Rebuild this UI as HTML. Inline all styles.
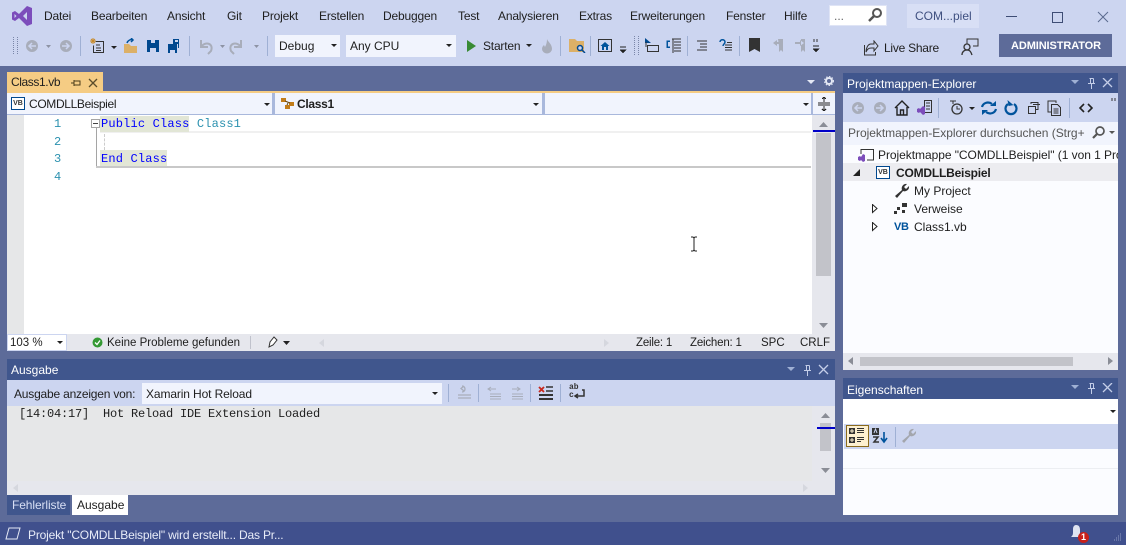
<!DOCTYPE html>
<html><head><meta charset="utf-8"><style>
html,body{margin:0;padding:0}
#r{position:relative;width:1126px;height:545px;overflow:hidden;background:#5d6b99;font-family:"Liberation Sans",sans-serif;font-size:12px;color:#1e1e1e}
.a,.t,svg{position:absolute}
.t{white-space:pre;line-height:16px}
.n{letter-spacing:-.18px}
.m{font-family:"Liberation Mono",monospace;font-size:12px;letter-spacing:.17px}
.o{font-family:"Liberation Mono",monospace;font-size:12px;letter-spacing:-.2px}
.s{width:1px;background:#9fb0d4}
.w{color:#fff}
.c{shape-rendering:crispEdges}
</style></head><body><div id="r">
<div class="a" style="left:0;top:0;width:1126px;height:66px;background:#ccd5f0"></div>
<svg style="left:11px;top:5px" width="22" height="22" viewBox="0 0 22 22"><path d="M16 1l5 2v16l-5 2-8-8-4 3-3-1.500V7.500L4 6l4 3zM16 7l-4 4 4 4zM3.500 9v4l2-2z" fill="#7c4dbb" fill-rule="evenodd"/></svg>
<div class="t n" style="left:44px;top:8px">Datei</div><div class="t n" style="left:91px;top:8px">Bearbeiten</div><div class="t n" style="left:167px;top:8px">Ansicht</div><div class="t n" style="left:227px;top:8px">Git</div><div class="t n" style="left:262px;top:8px">Projekt</div><div class="t n" style="left:319px;top:8px">Erstellen</div><div class="t n" style="left:383px;top:8px">Debuggen</div><div class="t n" style="left:458px;top:8px">Test</div><div class="t n" style="left:498px;top:8px">Analysieren</div><div class="t n" style="left:579px;top:8px">Extras</div><div class="t n" style="left:630px;top:8px">Erweiterungen</div><div class="t n" style="left:726px;top:8px">Fenster</div><div class="t n" style="left:784px;top:8px">Hilfe</div>
<div class="a" style="left:829px;top:5px;width:58px;height:21px;background:#fff;border:1px solid #dfe4f5;box-sizing:border-box"></div><div class="t" style="left:834px;top:8px;color:#666">...</div>
<svg style="left:867px;top:7px" width="16" height="16" viewBox="0 0 16 16"><circle cx="10" cy="6" r="4" fill="none" stroke="#555" stroke-width="2"/><path d="M7 9l-5 5" stroke="#555" stroke-width="2.500"/></svg>
<div class="a" style="left:907px;top:4px;width:72px;height:24px;background:#d8dff5"></div><div class="t" style="left:915px;top:8px;color:#3f5080">COM...piel</div>
<div class="a" style="left:1006px;top:16px;width:11px;height:1px;background:#3e4d75"></div><div class="a" style="left:1052px;top:12px;width:9px;height:9px;border:1px solid #3e4d75"></div>
<svg style="left:1097px;top:11px" width="12" height="12"><path d="M1 1l10 10M11 1L1 11" stroke="#5a6a8f" fill="none"/></svg>

<!-- toolbar -->
<div class="a" style="left:13px;top:37px;width:3px;height:17px;border-left:1px dotted #7a86a8;border-right:1px dotted #7a86a8"></div>
<svg style="left:24px;top:38px" width="50" height="16"><circle cx="8" cy="8" r="6" fill="#a8adba"/><path d="M12 8H5M8 5L5 8l3 3" stroke="#ccd5f0" fill="none" stroke-width="1.500"/><path d="M22 7h5l-2.500 3z" fill="#8d93a4"/><circle cx="42" cy="8" r="6" fill="#a8adba"/><path d="M38 8h7M42 5l3 3-3 3" stroke="#ccd5f0" fill="none" stroke-width="1.500"/></svg>
<div class="a s" style="left:80px;top:36px;height:20px"></div>
<svg style="left:89px;top:38px" width="90" height="17"><path d="M6.500 3.500h8v11h-10v-7" class="c" fill="none" stroke="#333"/><path d="M7 7h4M7 10h5M7 12.500h5" class="c" stroke="#333" fill="none"/><path d="M4 0v6M1 3h6M2 1l4 4M6 1L2 5" stroke="#c88a2a"/><path d="M22 8h6l-3 3z" fill="#222"/><path d="M35 6h5l2 2h6v7H35z" fill="#dcb067"/><path d="M38 5c1-3 4-4 6-3M42 0l2 2-2 2" stroke="#00539c" fill="none" stroke-width="1.500"/><path d="M58 2h12v12H58z" fill="#00488f" class="c"/><path d="M62 2h4v3h-4zM61 10h6v4h-6z" fill="#ccd5f0" class="c"/><path d="M79 6h9v9h-9z" fill="#00488f" class="c"/><path d="M84 1h8v9h-3V6h-5z" fill="#00488f" class="c"/><path d="M81 12h5v3h-5zM86 2h3v2h-3z" fill="#ccd5f0" class="c"/></svg>
<div class="a s" style="left:189px;top:36px;height:20px"></div>
<svg style="left:197px;top:38px" width="64" height="17"><path d="M4 2v7h7M4 9c4-6 13-4 10 4l-3 3" stroke="#a8adba" fill="none" stroke-width="2"/><path d="M23 7h5l-2.500 3z" fill="#8d93a4"/><path d="M44 2v7h-7M44 9c-4-6-13-4-10 4l3 3" stroke="#a8adba" fill="none" stroke-width="2"/><path d="M57 7h5l-2.500 3z" fill="#8d93a4"/></svg>
<div class="a s" style="left:267px;top:36px;height:20px"></div>
<div class="a" style="left:275px;top:35px;width:65px;height:22px;background:#f1f4fd"></div><div class="t" style="left:279px;top:38px">Debug</div>
<svg style="left:331px;top:44px" width="7" height="4"><path d="M0 0h6L3 3z" fill="#222"/></svg>
<div class="a" style="left:346px;top:35px;width:110px;height:22px;background:#f1f4fd"></div><div class="t" style="left:350px;top:38px">Any CPU</div>
<svg style="left:446px;top:44px" width="7" height="4"><path d="M0 0h6L3 3z" fill="#222"/></svg>
<svg style="left:467px;top:40px" width="12" height="13"><path d="M0 0l9 6-9 6z" fill="#388a34"/></svg>
<div class="t n" style="left:483px;top:38px;letter-spacing:-.2px">Starten</div>
<svg style="left:526px;top:44px" width="7" height="4"><path d="M0 0h6L3 3z" fill="#222"/></svg>
<svg style="left:541px;top:39px" width="12" height="15"><path d="M6 0c1 3 5 5 5 10a5 4.500 0 0 1-10 0c0-2 1-3 2-4l1 2c1-2 2-4 2-8z" fill="#a8adba"/></svg>
<div class="a s" style="left:560px;top:36px;height:20px"></div>
<svg style="left:568px;top:39px" width="18" height="14"><path d="M1 0h6l2 2h7v11H1z" fill="#dcb067"/><circle cx="12" cy="9" r="2.500" fill="#ccd5f0" stroke="#00488f" stroke-width="1.500"/><path d="M14 11l3 3" stroke="#00488f" stroke-width="1.500"/></svg>
<div class="a s" style="left:590px;top:36px;height:20px"></div>
<svg style="left:598px;top:39px" width="18" height="14"><rect x=".5" y=".5" width="13" height="12" fill="none" stroke="#333"/><path d="M2.500 7l4.500-4 4.500 4H10v4H4V7z" fill="#00539c"/><path d="M6 8h2v3H6z" fill="#ccd5f0"/></svg>
<svg style="left:620px;top:46px" width="7" height="9" class="c"><path d="M0 1h6M0 4h6L3 7z" stroke="#222" fill="#222" stroke-width=".7"/></svg>
<div class="a" style="left:634px;top:36px;width:3px;height:19px;border-left:1px dotted #7a86a8;border-right:1px dotted #7a86a8"></div>
<svg style="left:644px;top:38px" width="16" height="16"><path d="M1 0l6 5H1z" fill="#00488f"/><rect x="3.500" y="7.500" width="11" height="6" fill="none" stroke="#333" class="c"/><path d="M2 4v5" stroke="#333"/></svg>
<svg style="left:666px;top:38px" width="16" height="16" class="c"><path d="M6 1h9M8 4h7M8 7h7M8 10h7M8 13h7M7 1v14" stroke="#333"/><path d="M4 3H1v6h3" fill="none" stroke="#00539c" stroke-width="1.500"/></svg>
<div class="a s" style="left:687px;top:36px;height:20px"></div>
<svg style="left:696px;top:40px" width="14" height="12" class="c"><path d="M1 1h10M4 4h7M4 7h7M1 10h10" stroke="#333"/></svg>
<svg style="left:719px;top:39px" width="14" height="13"><path d="M1 3c0-3 5-3 5 0 0 2-2 2-2 4" stroke="#00539c" fill="none" stroke-width="1.500"/><path class="c" d="M6 6h7M6 8.500h7M6 11h7M8 3.500h5" stroke="#333"/></svg>
<div class="a s" style="left:739px;top:36px;height:20px"></div>
<svg style="left:749px;top:38px" width="12" height="15"><path d="M0 0h11v14l-5.500-3L0 14z" fill="#333"/></svg>
<svg style="left:772px;top:38px" width="48" height="16"><path d="M6 1h5v13l-2-2-2 2V8M1 5l4-3v2h3v2H5v2z" fill="#a8adba"/><path d="M31 1h-2v13l2-2 2 2V1zM23 4h5V2l4 3-4 3V6h-5z" fill="#a8adba"/><path d="M42 1v3M45 1v3" stroke="#333" class="c"/></svg>
<svg style="left:813px;top:45px" width="7" height="10" class="c"><path d="M0 1h6M0 4h6L3 7z" stroke="#222" fill="#222" stroke-width=".7"/></svg>
<svg style="left:863px;top:40px" width="16" height="16"><path d="M8 4h3V1l4 5-4 5V8H8c-3 0-4 2-5 4 0-4 2-8 5-8zM1.500 5v10h11v-3" fill="none" stroke="#333"/></svg>
<div class="t" style="left:884px;top:40px;letter-spacing:-.25px">Live Share</div>
<svg style="left:961px;top:38px" width="18" height="18"><path d="M6 6V1h11v7h-5" fill="none" stroke="#333"/><circle cx="6" cy="9" r="3" fill="none" stroke="#333" stroke-width="1.300"/><path d="M1 17c0-3 2-5 5-5s4 2 5 5" fill="none" stroke="#333" stroke-width="1.300"/></svg>
<div class="a" style="left:999px;top:34px;width:113px;height:23px;background:#5d6b99"></div><div class="t w" style="left:1011px;top:38px;font-weight:bold;font-size:11px;letter-spacing:-.1px">ADMINISTRATOR</div>

<!-- doc tab -->
<div class="a" style="left:7px;top:72px;width:96px;height:19px;background:#f5cc84"></div><div class="t" style="left:11px;top:74px;letter-spacing:-.4px">Class1.vb</div>
<svg style="left:70px;top:78px" width="30" height="10"><path d="M1 5h3M4 2v6M4 3h6v4H4" stroke="#4a3c1a" fill="none" class="c"/><path d="M19 1l8 8M27 1l-8 8" stroke="#5b4d2b" stroke-width="1.300"/></svg>
<svg style="left:807px;top:80px" width="8" height="5"><path d="M0 0h8L4 4z" fill="#e5e9f5"/></svg>
<svg style="left:824px;top:76px" width="10" height="10"><circle cx="5" cy="5" r="3" fill="none" stroke="#e5e9f5" stroke-width="2"/><circle cx="5" cy="5" r="4.500" fill="none" stroke="#e5e9f5" stroke-dasharray="1.500 1.500"/></svg>
<div class="a" style="left:7px;top:91px;width:828px;height:2px;background:#f5cc84"></div>
<div class="a" style="left:7px;top:93px;width:828px;height:22px;background:#a9b8dc"></div>
<div class="a" style="left:7px;top:93px;width:265px;height:21px;background:#f1f4fd"></div>
<div class="a" style="left:275px;top:93px;width:267px;height:21px;background:#f1f4fd"></div>
<div class="a" style="left:545px;top:93px;width:266px;height:21px;background:#f1f4fd"></div>
<div class="a" style="left:813px;top:93px;width:22px;height:21px;background:#f1f4fd"></div>
<div class="a" style="left:11px;top:97px;width:12px;height:11px;border:1px solid #00488f;box-sizing:content-box;background:#fff;font-size:7px;line-height:11px;text-align:center;font-weight:bold;color:#333">VB</div>
<div class="t" style="left:29px;top:96px;letter-spacing:-.35px">COMDLLBeispiel</div>
<svg style="left:264px;top:103px" width="7" height="4"><path d="M0 0h6L3 3z" fill="#222"/></svg>
<svg style="left:280px;top:97px" width="15" height="13"><path d="M1 1h5v4H1zM9 5h5v4H9zM5 8h5v4H5z" fill="#c27d1a"/><path d="M5 4l5 2M7 8l1-2" stroke="#6b4a10"/></svg>
<div class="t" style="left:297px;top:96px;font-weight:bold;letter-spacing:-.3px">Class1</div>
<svg style="left:533px;top:103px" width="7" height="4"><path d="M0 0h6L3 3z" fill="#222"/></svg>
<svg style="left:803px;top:103px" width="7" height="4"><path d="M0 0h6L3 3z" fill="#222"/></svg>
<svg style="left:817px;top:97px" width="14" height="14" class="c"><path d="M1 6h12M1 8h12M7 0v5M7 9v5M5 2l2-2 2 2M5 12l2 2 2-2" stroke="#222" fill="none"/></svg>

<!-- editor -->
<div class="a" style="left:7px;top:115px;width:828px;height:219px;background:#fff"></div>
<div class="a" style="left:7px;top:115px;width:17px;height:219px;background:#e6e7e8"></div>
<div class="a" style="left:812px;top:115px;width:23px;height:219px;background:#e6e7ed"></div>
<div class="a" style="left:816px;top:133px;width:15px;height:143px;background:#c2c3c9"></div>
<svg style="left:819px;top:122px" width="9" height="5"><path d="M0 5h9L4.500 0z" fill="#8a8d96"/></svg>
<svg style="left:819px;top:323px" width="9" height="5"><path d="M0 0h9L4.500 5z" fill="#8a8d96"/></svg>
<div class="a" style="left:813px;top:130px;width:22px;height:2px;background:#0000c8"></div>
<div class="a" style="left:100px;top:131px;width:711px;height:2px;background:#f0f0f0"></div>
<div class="a" style="left:100px;top:116px;width:89px;height:16px;background:#e2e6d6"></div>
<div class="a" style="left:100px;top:150px;width:67px;height:16px;background:#e2e6d6"></div>
<div class="a" style="left:96px;top:124px;width:1px;height:43px;background:#a5a5a5"></div>
<div class="a" style="left:96px;top:166px;width:715px;height:2px;background:#c8c8c8"></div>
<div class="a" style="left:91px;top:119px;width:7px;height:7px;border:1px solid #a5a5a5;background:#fff"></div><div class="a" style="left:93px;top:123px;width:5px;height:1px;background:#444"></div>
<div class="a" style="left:104px;top:134px;height:16px;border-left:1px dashed #ccc"></div>
<div class="t m" style="left:54px;top:116px;color:#2b91af">1</div><div class="t m" style="left:54px;top:134px;color:#2b91af">2</div><div class="t m" style="left:54px;top:151px;color:#2b91af">3</div><div class="t m" style="left:54px;top:169px;color:#2b91af">4</div>
<div class="t m" style="left:101px;top:116px;color:#00f">Public Class <span style="color:#2b91af">Class1</span></div>
<div class="t m" style="left:101px;top:151px;color:#00f">End Class</div>
<svg style="left:690px;top:236px" width="8" height="16"><path d="M1 1h2l1 1 1-1h2M4 2v12M1 15h2l1-1 1 1h2" stroke="#222" fill="none"/></svg>
<!-- editor status -->
<div class="a" style="left:7px;top:334px;width:828px;height:17px;background:#e6e7ed"></div>
<div class="a" style="left:7px;top:334px;width:60px;height:17px;background:#fff;border:1px solid #ccd5f0;box-sizing:border-box"></div><div class="t" style="left:10px;top:335px;font-size:11.500px">103 %</div>
<svg style="left:57px;top:341px" width="7" height="4"><path d="M0 0h6L3 3z" fill="#222"/></svg>
<svg style="left:92px;top:337px" width="11" height="11"><circle cx="5.500" cy="5.500" r="5" fill="#339933"/><path d="M3 5.500l2 2 3-4" stroke="#fff" fill="none" stroke-width="1.300"/></svg>
<div class="t" style="left:107px;top:335px;font-size:11.500px">Keine Probleme gefunden</div>
<div class="a" style="left:250px;top:336px;width:1px;height:13px;background:#c0c2cc"></div>
<svg style="left:266px;top:336px" width="24" height="13"><path d="M8 1l3 3-4 5-4 2 1-5z" fill="#fff" stroke="#333"/><path d="M17 5h7l-3.500 4z" fill="#222"/></svg>
<svg style="left:319px;top:339px" width="6" height="9"><path d="M5 0v8L0 4z" fill="#d5d7de"/></svg>
<svg style="left:604px;top:339px" width="6" height="9"><path d="M0 0v8l5-4z" fill="#d5d7de"/></svg>
<div class="t" style="left:636px;top:335px;font-size:11.500px;letter-spacing:-.2px">Zeile: 1</div><div class="t" style="left:690px;top:335px;font-size:11.500px;letter-spacing:-.2px">Zeichen: 1</div><div class="t" style="left:761px;top:335px;font-size:11.500px">SPC</div><div class="t" style="left:800px;top:335px;font-size:11.500px">CRLF</div>

<!-- output -->
<div class="a" style="left:7px;top:359px;width:828px;height:21px;background:#40568d"></div><div class="t w" style="left:11px;top:362px">Ausgabe</div>
<svg style="left:787px;top:364px" width="46" height="12"><path d="M0 3h8L4 7z" fill="#9fb0d4"/><path d="M18.500 1.500h4M19.500 1.500v5h3v-5M17 6.500h7M20.500 7v5" stroke="#c4cee8" fill="none" class="c"/><path d="M32 1l9 9M41 1l-9 9" stroke="#c4cee8" stroke-width="1.300"/></svg>
<div class="a" style="left:7px;top:380px;width:828px;height:26px;background:#ccd5f0"></div>
<div class="t" style="left:14px;top:386px;letter-spacing:-.2px">Ausgabe anzeigen von:</div>
<div class="a" style="left:142px;top:383px;width:300px;height:21px;background:#f1f4fd"></div><div class="t" style="left:146px;top:386px;letter-spacing:-.12px">Xamarin Hot Reload</div>
<svg style="left:432px;top:392px" width="7" height="4"><path d="M0 0h6L3 3z" fill="#222"/></svg>
<div class="a s" style="left:448px;top:384px;height:18px"></div>
<svg style="left:457px;top:385px" width="16" height="16"><path d="M5 1a3 3 0 1 1 0 6M7 1L4 3.500 7 6M1 10h13M1 13h13" stroke="#a8adba" fill="none" stroke-width="1.300"/></svg>
<div class="a s" style="left:478px;top:384px;height:18px"></div>
<svg style="left:487px;top:386px" width="40" height="15"><path d="M1 3h8M4 1L1 3l3 2M3 8h11M3 10.500h11M3 13h11" stroke="#a8adba" fill="none"/><path d="M25 3h8M30 1l3 2-3 2M25 8h11M25 10.500h11M25 13h11" stroke="#a8adba" fill="none"/></svg>
<div class="a s" style="left:530px;top:384px;height:18px"></div>
<svg style="left:538px;top:386px" width="16" height="15"><path d="M1 1l5 5M6 1L1 6" stroke="#c8281e" stroke-width="1.800"/><path d="M8 1h7M8 5h7" stroke="#333" stroke-width="1.500"/><path d="M1 9h14M1 13h14" stroke="#333" stroke-width="2"/></svg>
<div class="a s" style="left:560px;top:384px;height:18px"></div>
<svg style="left:569px;top:386px" width="16" height="15"><path d="M13 4h2v6H7M9 8l-3 2 3 2" stroke="#333" fill="none" stroke-width="1.500"/></svg>
<div class="t" style="left:569px;top:384px;font:bold 8px/8px 'Liberation Mono',monospace;color:#333">ab<br>c</div>
<div class="a" style="left:7px;top:406px;width:828px;height:89px;background:#e6e7e8"></div>
<div class="t o" style="left:19px;top:406px;color:#1e1e1e">[14:04:17]  Hot Reload IDE Extension Loaded</div>
<div class="a" style="left:812px;top:406px;width:23px;height:89px;background:#e6e7ed"></div>
<div class="a" style="left:820px;top:423px;width:11px;height:28px;background:#c2c3c9"></div>
<svg style="left:821px;top:413px" width="9" height="5"><path d="M0 5h9L4.500 0z" fill="#8a8d96"/></svg>
<svg style="left:821px;top:468px" width="9" height="5"><path d="M0 0h9L4.500 5z" fill="#8a8d96"/></svg>
<div class="a" style="left:817px;top:427px;width:18px;height:2px;background:#0000c8"></div>
<div class="a" style="left:7px;top:481px;width:805px;height:14px;background:#e6e7ed"></div>
<svg style="left:13px;top:484px" width="6" height="9"><path d="M5 0v8L0 4z" fill="#d5d7de"/></svg>
<svg style="left:803px;top:484px" width="6" height="9"><path d="M0 0v8l5-4z" fill="#d5d7de"/></svg>
<div class="a" style="left:7px;top:495px;width:63px;height:20px;background:#40568d"></div><div class="t" style="left:12px;top:497px;color:#d8dff5;letter-spacing:-.1px">Fehlerliste</div>
<div class="a" style="left:72px;top:495px;width:56px;height:20px;background:#fff"></div><div class="t" style="left:77px;top:497px">Ausgabe</div>

<!-- explorer -->
<div class="a" style="left:843px;top:73px;width:275px;height:20px;background:#40568d"></div><div class="t w" style="left:847px;top:76px">Projektmappen-Explorer</div>
<svg style="left:1071px;top:78px" width="46" height="12"><path d="M0 2h8L4 6z" fill="#9fb0d4"/><path d="M18.500 .5h4M19.500 .5v5h3v-5M17 5.500h7M20.500 6v5" stroke="#c4cee8" fill="none" class="c"/><path d="M32 0l9 9M41 0l-9 9" stroke="#c4cee8" stroke-width="1.300"/></svg>
<div class="a" style="left:843px;top:93px;width:275px;height:29px;background:#ccd5f0"></div>
<svg style="left:851px;top:101px" width="36" height="14"><circle cx="7" cy="7" r="6" fill="#a8adba"/><path d="M11 7H4M7 4L4 7l3 3" stroke="#ccd5f0" fill="none" stroke-width="1.500"/><circle cx="29" cy="7" r="6" fill="#a8adba"/><path d="M25 7h7M29 4l3 3-3 3" stroke="#ccd5f0" fill="none" stroke-width="1.500"/></svg>
<svg style="left:894px;top:100px" width="16" height="16"><path d="M1 8l7-7 7 7M3 7v8h10V7M6.500 15v-5h3v5" stroke="#222" fill="none" stroke-width="1.400"/></svg>
<svg style="left:917px;top:100px" width="16" height="16"><rect x="7.500" y=".5" width="7" height="12" fill="none" stroke="#333"/><path d="M9 3h4M9 6h4M9 9h4" stroke="#333" class="c"/><path d="M6 6l2 1v7l-2 1-3-3-1 1-2-1V9l2-1 1 1z" fill="#7c4dbb"/></svg>
<div class="a s" style="left:938px;top:98px;height:20px"></div>
<svg style="left:948px;top:100px" width="32" height="17"><circle cx="9" cy="9" r="5" fill="none" stroke="#333" stroke-width="1.300"/><path d="M9 6v3h3M2 1h6M5 1v3" stroke="#333" fill="none"/><path d="M21 7h6l-3 3z" fill="#222"/></svg>
<svg style="left:981px;top:100px" width="16" height="16"><path d="M1 7c1-4 6-6 10-3M15 9c-1 4-6 6-10 3" stroke="#00539c" fill="none" stroke-width="2.200"/><path d="M9 6h6V1zM7 10H1v5z" fill="#00539c"/></svg>
<svg style="left:1003px;top:100px" width="15" height="16"><path d="M5 4a5.500 5.500 0 1 0 6 0" stroke="#00539c" fill="none" stroke-width="2.200"/><path d="M5 0v6h5z" fill="#00539c" transform="rotate(-10 5 3)"/></svg>
<svg style="left:1027px;top:101px" width="14" height="14" class="c"><rect x="1.500" y="5.500" width="7" height="7" fill="#ccd5f0" stroke="#333"/><path d="M4 3V1.500h7v7H9M6 3.500h7" stroke="#333" fill="none"/></svg>
<svg style="left:1047px;top:100px" width="15" height="16" class="c"><path d="M4 12H1V1h8v2" stroke="#333" fill="none"/><path d="M4.500 4.500h6l3 3v8h-9z" fill="#ccd5f0" stroke="#333"/><path d="M6.500 9h5M6.500 11h5M6.500 13h5" stroke="#333"/></svg>
<div class="a s" style="left:1069px;top:98px;height:20px"></div>
<svg style="left:1079px;top:102px" width="14" height="12"><path d="M5 2L1 6l4 4M9 2l4 4-4 4" stroke="#222" fill="none" stroke-width="1.600"/></svg>
<svg style="left:1111px;top:98px" width="6" height="4" class="c"><path d="M1 0v3M4 0v3" stroke="#333"/></svg>
<div class="a" style="left:843px;top:122px;width:275px;height:23px;background:#f1f4fd"></div><div class="t" style="left:848px;top:125px;color:#555;letter-spacing:-.03px">Projektmappen-Explorer durchsuchen (Strg+</div>
<svg style="left:1091px;top:125px" width="26" height="15"><circle cx="9" cy="6" r="4" fill="none" stroke="#555" stroke-width="1.700"/><path d="M6 9l-4 4" stroke="#555" stroke-width="2.200"/><path d="M18 6h6l-3 3z" fill="#555"/></svg>
<div class="a" style="left:843px;top:145px;width:275px;height:208px;background:#fbfcff"></div>
<div class="a" style="left:843px;top:163px;width:275px;height:18px;background:#ececf0"></div>
<svg style="left:858px;top:147px" width="17" height="16"><path d="M3 7V2.500h12.500v10.500H9" fill="none" stroke="#333" class="c"/><path d="M5 7l2 1v6l-2 1-2-2-1 1-2-1v-3l2-1 1 1z" fill="#7c4dbb"/></svg>
<div class="t" style="left:878px;top:147px;width:240px;overflow:hidden;letter-spacing:-.05px">Projektmappe "COMDLLBeispiel" (1 von 1 Projekt)</div>
<svg style="left:853px;top:169px" width="8" height="8"><path d="M7 0v7H0z" fill="#222"/></svg>
<div class="a" style="left:876px;top:166px;width:12px;height:11px;border:1px solid #00488f;background:#fff;font-size:7px;line-height:11px;text-align:center;font-weight:bold;color:#333">VB</div>
<div class="t" style="left:896px;top:165px;font-weight:bold;letter-spacing:-.2px">COMDLLBeispiel</div>
<svg style="left:894px;top:183px" width="16" height="16"><path d="M15 3l-3 3-2-2 3-3a4.500 4.500 0 0 0-5 6l-7 6 2 2 6-7a4.500 4.500 0 0 0 6-5z" fill="#333"/></svg>
<div class="t" style="left:914px;top:183px">My Project</div>
<svg style="left:872px;top:204px" width="6" height="10"><path d="M.5.500l4.500 4-4.500 4z" fill="#fff" stroke="#222"/></svg>
<svg style="left:894px;top:203px" width="14" height="12" class="c"><path d="M8 0h5v4H8zM3 4h3v3H3zM0 8h3v3H0zM8 7h3v3H8z" fill="#333"/></svg>
<div class="t" style="left:914px;top:201px">Verweise</div>
<svg style="left:872px;top:222px" width="6" height="10"><path d="M.5.500l4.500 4-4.500 4z" fill="#fff" stroke="#222"/></svg>
<div class="t" style="left:894px;top:219px;font-size:11px;font-weight:bold;color:#00539c;letter-spacing:-.3px">VB</div>
<div class="t" style="left:914px;top:219px">Class1.vb</div>
<div class="a" style="left:843px;top:353px;width:275px;height:17px;background:#e6e7ed"></div>
<div class="a" style="left:860px;top:357px;width:213px;height:9px;background:#c2c3c9"></div>
<svg style="left:848px;top:357px" width="6" height="9"><path d="M5 0v8L0 4z" fill="#8a8d96"/></svg>
<svg style="left:1108px;top:357px" width="6" height="9"><path d="M0 0v8l5-4z" fill="#8a8d96"/></svg>

<!-- properties -->
<div class="a" style="left:843px;top:378px;width:275px;height:21px;background:#40568d"></div><div class="t w" style="left:847px;top:382px">Eigenschaften</div>
<svg style="left:1071px;top:383px" width="46" height="12"><path d="M0 2h8L4 6z" fill="#9fb0d4"/><path d="M18.500 .5h4M19.500 .5v5h3v-5M17 5.500h7M20.500 6v5" stroke="#c4cee8" fill="none" class="c"/><path d="M32 0l9 9M41 0l-9 9" stroke="#c4cee8" stroke-width="1.300"/></svg>
<div class="a" style="left:843px;top:399px;width:275px;height:116px;background:#fbfcff"></div>
<div class="a" style="left:843px;top:399px;width:275px;height:25px;background:#fff"></div>
<svg style="left:1110px;top:410px" width="7" height="4"><path d="M0 0h6L3 3z" fill="#222"/></svg>
<div class="a" style="left:844px;top:424px;width:274px;height:25px;background:#ccd5f0"></div>
<div class="a" style="left:846px;top:425px;width:21px;height:20px;border:1px solid #8a6a1c;background:#fdf0d0"></div>
<svg style="left:849px;top:428px" width="16" height="16" class="c"><path d="M0 0h6v6H0zM0 9h6v6H0z" fill="#333"/><path d="M1 3h4M3 1v4M1 12h4M3 10v4" stroke="#fdf0d0"/><path d="M8 0.500h7M8 2.500h7M8 4.500h7M8 9.500h7M8 11.500h7M8 13.500h4" stroke="#333"/></svg>
<svg style="left:872px;top:428px" width="16" height="16"><path d="M0 0h7v7H0z" fill="#333" class="c"/><path d="M2 5l1.500-4L5 5" stroke="#ccd5f0" fill="none"/><path d="M1 9h5L2 14h5" stroke="#333" fill="none" stroke-width="1.500"/><path d="M12 4v10M9 10l3 4 3-4" stroke="#00539c" fill="none" stroke-width="1.600"/></svg>
<div class="a s" style="left:895px;top:427px;height:20px"></div>
<svg style="left:901px;top:428px" width="16" height="16"><path d="M15 3l-3 3-2-2 3-3a4.500 4.500 0 0 0-5 6l-7 6 2 2 6-7a4.500 4.500 0 0 0 6-5z" fill="#a3a6ad"/></svg>
<div class="a" style="left:843px;top:468px;width:275px;height:1px;background:#eceef2"></div>

<!-- status bar -->
<div class="a" style="left:0;top:522px;width:1126px;height:23px;background:#40508d"></div>
<svg style="left:5px;top:527px" width="16" height="13"><path d="M4 1h11l-3 11H1z" fill="none" stroke="#e5e9f5"/></svg>
<div class="t" style="left:28px;top:527px;color:#e8ecf8;letter-spacing:-.18px">Projekt "COMDLLBeispiel" wird erstellt... Das Pr...</div>
<svg style="left:1069px;top:525px" width="14" height="15"><path d="M7 0c3 0 4 2 4 5v5l2 2H2c1-1 2-2 2-4V4c0-2 1-4 3-4z" fill="#dfe3f0"/></svg>
<div class="a" style="left:1078px;top:532px;width:11px;height:11px;border-radius:50%;background:#c8201a;color:#fff;font-size:9px;line-height:11px;text-align:center;font-weight:bold">1</div>
<svg style="left:1113px;top:533px" width="10" height="10" class="c"><path d="M7 1h1M5 3h1M7 3h1M3 5h1M5 5h1M7 5h1M1 7h1M3 7h1M5 7h1M7 7h1" stroke="#8f9cc4"/></svg>
</div></body></html>
